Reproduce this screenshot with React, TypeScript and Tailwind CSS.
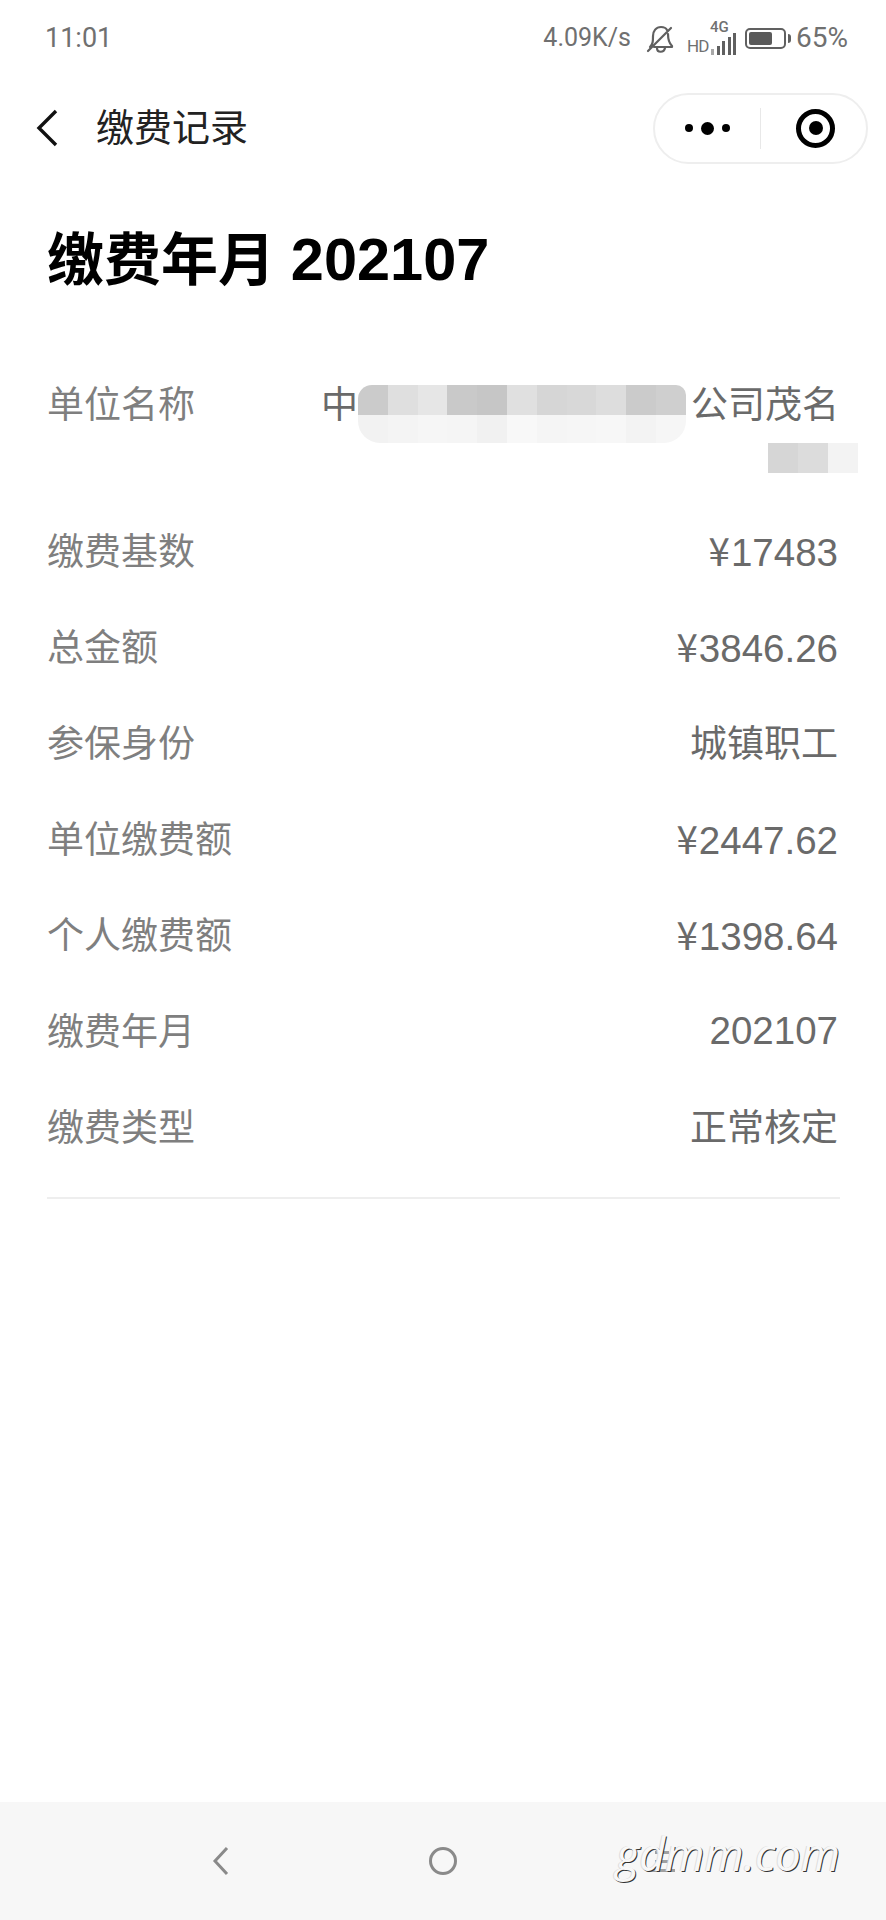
import React from 'react';

const rows = [
  { label: '缴费基数', value: '¥17483' },
  { label: '总金额', value: '¥3846.26' },
  { label: '参保身份', value: '城镇职工' },
  { label: '单位缴费额', value: '¥2447.62' },
  { label: '个人缴费额', value: '¥1398.64' },
  { label: '缴费年月', value: '202107' },
  { label: '缴费类型', value: '正常核定' },
];

// pixelated cover over the company name
const mosaicTop = ['#cbcbcb', '#dfdfdf', '#e6e6e6', '#c9c9c9', '#c6c6c6', '#e0e0e0', '#d6d6d6', '#d8d8d8', '#dddddd', '#cbcbcb', '#cfcfcf'];
const mosaicBottom = ['#f2f2f2', '#f4f4f4', '#f6f6f6', '#f5f5f5', '#f1f1f1', '#f8f8f8', '#f5f5f5', '#f6f6f6', '#f7f7f7', '#f3f3f3', '#f6f6f6'];

function StatusBar() {
  return (
    <div className='flex h-[76px] items-center justify-between pl-[45px] pr-[38px] font-["Roboto",sans-serif] text-[#707070]'>
      <span className="text-[27px]">11:01</span>
      <div className="flex items-center">
        <span className="text-[25px]">4.09K/s</span>
        <svg className="ml-[15px] h-[30px] w-[28px]" viewBox="0 0 28 30" fill="none" stroke="#606060" strokeWidth="2.2">
          <path d="M4 24c3-3 3-6 3-11 0-5 3-9 8-9 3 0 5 1 6 3M22 11c0 6 1 9 4 12v1H8M11 25c0 5 7 5 8 0M2 28L25 5" strokeLinecap="round" strokeLinejoin="round" />
        </svg>
        <div className="relative ml-[13px] h-[30px] w-[52px]">
          <span className="absolute bottom-[-3px] left-0 text-[17px] leading-[20px] tracking-[-1px]">HD</span>
          <span className="absolute left-[23px] top-[-3px] text-[15px] font-medium leading-[14px]">4G</span>
          <div className="absolute bottom-[-2px] left-[24px] flex items-end gap-[2.5px]">
            <div className="h-[6px] w-[3px] bg-[#a8a8a8]" />
            <div className="h-[9px] w-[3px] bg-[#606060]" />
            <div className="h-[14px] w-[3px] bg-[#606060]" />
            <div className="h-[18px] w-[3px] bg-[#606060]" />
            <div className="h-[22px] w-[3px] bg-[#606060]" />
          </div>
        </div>
        <div className="ml-[6px] flex items-center">
          <div className="flex h-[21px] w-[41px] items-center rounded-[5px] border-2 border-[#606060] p-[2px]">
            <div className="h-full w-[23px] rounded-[2px] bg-[#5a5a5a]" />
          </div>
          <div className="ml-[2px] h-[9px] w-[3px] rounded-r-sm bg-[#606060]" />
        </div>
        <span className="ml-[5px] text-[28px]">65%</span>
      </div>
    </div>
  );
}

function NavBar() {
  return (
    <div className="flex h-[104px] items-center justify-between pl-[36px] pr-[18px]">
      <div className="flex items-center">
        <svg className="h-[38px] w-[24px]" viewBox="0 0 24 38" fill="none" stroke="#111" strokeWidth="3.4">
          <path d="M20 2L3 19l17 17" />
        </svg>
        <span className="ml-9 text-[38px] leading-[48px] text-[#222]">缴费记录</span>
      </div>
      <div className="flex h-[71px] w-[215px] items-center rounded-full border-2 border-[#eeeeee]">
        <div className="flex w-[105px] items-center justify-center gap-[8px]">
          <div className="size-[8px] rounded-full bg-black" />
          <div className="size-[13px] rounded-full bg-black" />
          <div className="size-[8px] rounded-full bg-black" />
        </div>
        <div className="h-[41px] w-px bg-[#e8e8e8]" />
        <div className="flex flex-1 items-center justify-center pl-[4px]">
          <div className="flex size-[39px] items-center justify-center rounded-full border-[5px] border-black">
            <div className="size-[14px] rounded-full bg-black" />
          </div>
        </div>
      </div>
    </div>
  );
}

function Row({ label, value }: { label: string; value: string }) {
  const hasYen = value.startsWith('¥');
  const isNumber = /\d/.test(value);
  return (
    <div className="flex h-[96px] items-center justify-between text-[37px] leading-[48px]">
      <span className="text-[#7f7f7f]">{label}</span>
      {isNumber ? (
        <span className="mb-[4px] mr-[2px] text-[38.5px] text-[#6a6a6a]">
          {hasYen && <span className='mr-[1px] font-["Noto_Sans_CJK_SC",sans-serif]'>¥</span>}
          {hasYen ? value.slice(1) : value}
        </span>
      ) : (
        <span className="mr-[2px] text-[#6a6a6a]">{value}</span>
      )}
    </div>
  );
}

export default function App() {
  return (
    <div className='flex min-h-[1920px] flex-col bg-white font-["Liberation_Sans","Noto_Sans_CJK_SC",sans-serif]'>
      <StatusBar />
      <NavBar />
      <div className="flex-1 px-[47px]">
        <h1 className="mt-[45px] text-[57px] font-bold leading-[70px] text-black">
          缴费年月 <span className="text-[59.5px]">202107</span>
        </h1>
        <div className="relative mt-[87px] flex justify-between pb-[75px] text-[37px] leading-[48px]">
          <span className="text-[#7f7f7f]">单位名称</span>
          <div className="w-[518px] text-[#6a6a6a]">
            <div className="flex justify-between">
              <span>中</span>
              <span>公司茂名</span>
            </div>
          </div>
          <div className="absolute left-[311px] top-[3px]">
            <div className="flex">
              {mosaicTop.map((c, i) => (
                <div
                  key={i}
                  className="h-[30px] w-[29.8px] first:rounded-tl-[14px] last:rounded-tr-[10px]"
                  style={{ backgroundColor: c }}
                />
              ))}
            </div>
            <div className="flex">
              {mosaicBottom.map((c, i) => (
                <div
                  key={i}
                  className="h-[28px] w-[29.8px] first:rounded-bl-[22px] last:rounded-br-[22px]"
                  style={{ backgroundColor: c }}
                />
              ))}
            </div>
          </div>
          <div className="absolute left-[721px] top-[61px] flex">
            <div className="h-[30px] w-[30px] bg-[#d6d6d6]" />
            <div className="h-[30px] w-[30px] bg-[#dcdcdc]" />
            <div className="h-[30px] w-[30px] bg-[#f3f3f3]" />
          </div>
        </div>
        <div className="mr-[-1px] border-b-2 border-[#eeeeee] pb-[20px]">
          {rows.map((r) => (
            <Row key={r.label} label={r.label} value={r.value} />
          ))}
        </div>
      </div>
      <div className="relative flex h-[118px] items-center bg-[#f7f7f7] pl-[212px]">
        <svg className="h-[30px] w-[18px]" viewBox="0 0 18 30" fill="none" stroke="#8a8a8a" strokeWidth="3">
          <path d="M15 2L3 15l12 13" />
        </svg>
        <div className="ml-[199px] size-[28px] rounded-full border-[3px] border-[#8a8a8a]" />
        <div className="ml-[192px] flex w-[26px] flex-col gap-[6px]">
          <div className="h-[3px] w-[14px] self-center bg-[#a0a0a0]" />
          <div className="h-[3px] w-[14px] self-center bg-[#a0a0a0]" />
          <div className="h-[3px] bg-[#a0a0a0]" />
        </div>
        <span className="absolute left-[616px] top-[22px] font-['Open_Sans',sans-serif] text-[45px] italic leading-[60px] text-[#f8f8f8] [text-shadow:1px_1px_0_#333,-1px_0_0_#ddd]">gdmm.com</span>
      </div>
    </div>
  );
}
